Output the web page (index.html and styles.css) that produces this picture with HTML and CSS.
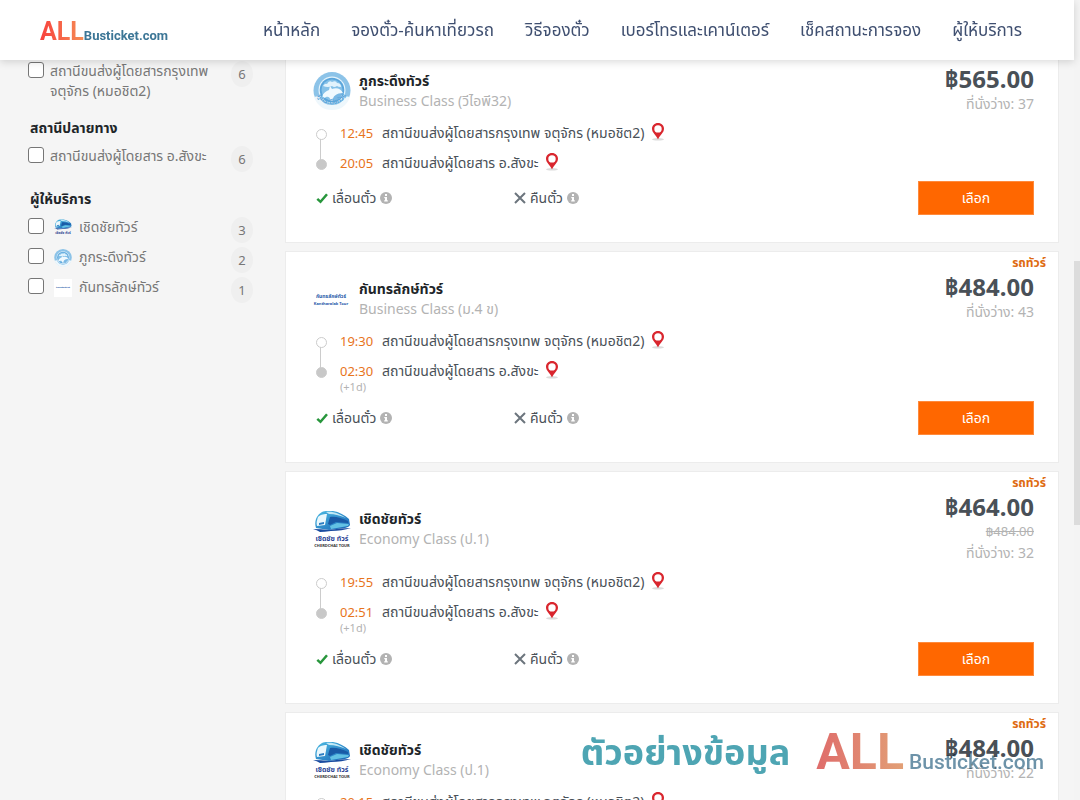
FILE: index.html
```html
<!DOCTYPE html>
<html lang="th">
<head>
<meta charset="utf-8">
<meta name="viewport" content="width=device-width, initial-scale=1">
<title>ALL Busticket.com</title>
<link rel="stylesheet" href="styles.css">
</head>
<body>
<svg class="sprite" aria-hidden="true">
  <defs>
    <linearGradient id="sea" x1="0" y1="0" x2="1" y2="1"><stop offset="0" stop-color="#4dbbe2"/><stop offset="1" stop-color="#1763b5"/></linearGradient>
    <path id="rim" d="M3 21 A17 17 0 0 0 35 21"/>
  </defs>
  <symbol id="pin" viewBox="0 0 16 18">
    <ellipse cx="8" cy="16.300" rx="6" ry="1.300" fill="#dcdcdc"/>
    <path d="M8 0C4.500 0 2 2.500 2 5.800c0 3.800 3.800 6.200 6 10.500 2.200-4.300 6-6.700 6-10.500C14 2.500 11.500 0 8 0z" fill="#d9262e"/>
    <circle cx="8" cy="5.900" r="3.700" fill="#fff"/>
  </symbol>
  <symbol id="check" viewBox="0 0 12 12"><path d="M1.300 6.800 4.500 9.800 11 2.200" fill="none" stroke="#28963c" stroke-width="2.500"/></symbol>
  <symbol id="cross" viewBox="0 0 12 12"><path d="M1 1 11 11M11 1 1 11" fill="none" stroke="#6c757d" stroke-width="2"/></symbol>
  <symbol id="info" viewBox="0 0 12 12"><circle cx="6" cy="6" r="6" fill="#b3b3b3"/><path d="M5 2h2v2H5zM4.300 5H7v3.300h.8v1.200H4.200V8.300H5V6.200h-.7z" fill="#fff"/></symbol>
  <symbol id="phukradung" viewBox="0 0 38 38">
    <circle cx="19" cy="18.500" r="18.500" fill="#8cc3e8"/>
    <path d="M1 25q5 13 18 13t18-13l-5-1q-3 9-13 9T6 24z" fill="#eef7fc"/>
    <circle cx="19" cy="18" r="13.500" fill="#e4f3fb"/>
    <circle cx="19" cy="18" r="12.300" fill="#5aa5db"/>
    <circle cx="19" cy="18" r="10.500" fill="#85c1e8"/>
    <path d="M9 25c1-4 4-6 7-7l1-4 2 3c5-2 9 0 11 4-2 6-6 8-12 8-1-4-3-5-5-4l-3 2z" fill="#f0f9fe"/>
    <path d="M20 29c-1-5 4-8 10-8-2 5-5 8-10 8z" fill="#79b8e4"/>
    <path d="M10 14q2-3 4-2 2-4 5-2 4-2 5 1 4 0 4 4-3 0-4-1-3 2-5 0-4 2-9 0z" fill="#e2f3fc"/>
  </symbol>
  <symbol id="cherdchai" viewBox="0 0 38 38">
    <path d="M3 9C5 4 9 1 13 1h7c6 1 12 4 16 8l1 6c-1 2-3 2-5 3l-16 2-13-2C2 15 2 12 3 9z" fill="url(#sea)"/>
    <path d="M5 7c3-3 7-3 9-3l-2 11-8 1c-1-3 0-6 1-9z" fill="#e9f7fc"/>
    <path d="M13 2c7-1 14 2 20 6-5-2-11-4-17-4z" fill="#c2e8f5"/>
    <path d="M17 7c5-1 12 1 18 4v2l-12-1-6 3-2-1z" fill="#1a5aa6"/>
    <path d="M17 16l7-3 12 1-1 2-17 3z" fill="#63c1e4"/>
    <path d="M6 13l5-1v2l-5 1z" fill="#2a7dc2"/>
    <path d="M0 19q8 0 16 1 11-2 22-2-9 3-20 3-7 1-11 1-3-2-7-3z" fill="#1b4ca0"/>
  </symbol>
  <symbol id="kantharalak" viewBox="0 0 38 38"><rect width="38" height="38" fill="#fff"/></symbol>
</svg>

<header class="topbar">
  <a class="brand" href="#"><span class="brand-all">ALL</span><span class="brand-rest">Busticket.com</span></a>
  <nav class="nav">
    <a href="#">หน้าหลัก</a>
    <a href="#">จองตั๋ว-ค้นหาเที่ยวรถ</a>
    <a href="#">วิธีจองตั๋ว</a>
    <a href="#">เบอร์โทรและเคาน์เตอร์</a>
    <a href="#">เช็คสถานะการจอง</a>
    <a href="#">ผู้ให้บริการ</a>
  </nav>
</header>

<div class="page">
  <aside class="filters">
    <section class="group">
      <label class="option"><input type="checkbox"><span class="option-text">สถานีขนส่งผู้โดยสารกรุงเทพ<br>จตุจักร (หมอชิต2)</span><span class="count">6</span></label>
    </section>
    <section class="group">
      <h2>สถานีปลายทาง</h2>
      <label class="option"><input type="checkbox"><span class="option-text">สถานีขนส่งผู้โดยสาร อ.สังขะ</span><span class="count">6</span></label>
    </section>
    <section class="group">
      <h2>ผู้ให้บริการ</h2>
      <label class="option"><input type="checkbox"><svg class="mini" viewBox="0 0 38 38"><use href="#cherdchai"/><text class="bus-name" x="19" y="31" text-anchor="middle">เชิดชัย ทัวร์</text></svg><span class="option-text">เชิดชัยทัวร์</span><span class="count">3</span></label>
      <label class="option"><input type="checkbox"><svg class="mini" viewBox="0 0 38 38"><use href="#phukradung"/></svg><span class="option-text">ภูกระดึงทัวร์</span><span class="count">2</span></label>
      <label class="option"><input type="checkbox"><svg class="mini" viewBox="0 0 38 38"><use href="#kantharalak"/><text class="kan-name" x="19" y="19" text-anchor="middle">กันทรลักษ์ทัวร์</text></svg><span class="option-text">กันทรลักษ์ทัวร์</span><span class="count">1</span></label>
    </section>
  </aside>

  <main class="trips">
    <article class="trip">
      <span class="tag">รถทัวร์</span>
      <div class="row head">
        <svg class="logo" viewBox="0 0 38 38"><use href="#phukradung"/><text class="rim-text"><textPath href="#rim" startOffset="50%" text-anchor="middle">ภูกระดึงทัวร์</textPath></text></svg>
        <div class="operator"><h3>ภูกระดึงทัวร์</h3><p>Business Class (วีไอพี32)</p></div>
        <div class="fare"><strong>฿565.00</strong><span>ที่นั่งว่าง: 37</span></div>
      </div>
      <ol class="route">
        <li><time>12:45</time><span>สถานีขนส่งผู้โดยสารกรุงเทพ จตุจักร (หมอชิต2)</span><svg class="pin"><use href="#pin"/></svg></li>
        <li><time>20:05</time><span>สถานีขนส่งผู้โดยสาร อ.สังขะ</span><svg class="pin"><use href="#pin"/></svg></li>
      </ol>
      <div class="row foot">
        <span class="perk"><svg class="ico"><use href="#check"/></svg>เลื่อนตั๋ว<svg class="ico info"><use href="#info"/></svg></span>
        <span class="perk"><svg class="ico"><use href="#cross"/></svg>คืนตั๋ว<svg class="ico info"><use href="#info"/></svg></span>
        <button class="select" type="button">เลือก</button>
      </div>
    </article>

    <article class="trip">
      <span class="tag">รถทัวร์</span>
      <div class="row head">
        <svg class="logo" viewBox="0 0 38 38"><use href="#kantharalak"/><text class="kan-name" x="18" y="18" text-anchor="middle">กันทรลักษ์ทัวร์</text><text class="kan-sub" x="18" y="25" text-anchor="middle">Kantharalak Tour</text></svg>
        <div class="operator"><h3>กันทรลักษ์ทัวร์</h3><p>Business Class (ม.4 ข)</p></div>
        <div class="fare"><strong>฿484.00</strong><span>ที่นั่งว่าง: 43</span></div>
      </div>
      <ol class="route">
        <li><time>19:30</time><span>สถานีขนส่งผู้โดยสารกรุงเทพ จตุจักร (หมอชิต2)</span><svg class="pin"><use href="#pin"/></svg></li>
        <li><time>02:30</time><span>สถานีขนส่งผู้โดยสาร อ.สังขะ</span><svg class="pin"><use href="#pin"/></svg><small>(+1d)</small></li>
      </ol>
      <div class="row foot">
        <span class="perk"><svg class="ico"><use href="#check"/></svg>เลื่อนตั๋ว<svg class="ico info"><use href="#info"/></svg></span>
        <span class="perk"><svg class="ico"><use href="#cross"/></svg>คืนตั๋ว<svg class="ico info"><use href="#info"/></svg></span>
        <button class="select" type="button">เลือก</button>
      </div>
    </article>

    <article class="trip">
      <span class="tag">รถทัวร์</span>
      <div class="row head">
        <svg class="logo" viewBox="0 0 38 38"><use href="#cherdchai"/><text class="bus-name" x="19" y="31" text-anchor="middle">เชิดชัย ทัวร์</text><text class="bus-sub" x="19" y="37" text-anchor="middle">CHERDCHAI TOUR</text></svg>
        <div class="operator"><h3>เชิดชัยทัวร์</h3><p>Economy Class (ป.1)</p></div>
        <div class="fare"><strong>฿464.00</strong><s>฿484.00</s><span>ที่นั่งว่าง: 32</span></div>
      </div>
      <ol class="route">
        <li><time>19:55</time><span>สถานีขนส่งผู้โดยสารกรุงเทพ จตุจักร (หมอชิต2)</span><svg class="pin"><use href="#pin"/></svg></li>
        <li><time>02:51</time><span>สถานีขนส่งผู้โดยสาร อ.สังขะ</span><svg class="pin"><use href="#pin"/></svg><small>(+1d)</small></li>
      </ol>
      <div class="row foot">
        <span class="perk"><svg class="ico"><use href="#check"/></svg>เลื่อนตั๋ว<svg class="ico info"><use href="#info"/></svg></span>
        <span class="perk"><svg class="ico"><use href="#cross"/></svg>คืนตั๋ว<svg class="ico info"><use href="#info"/></svg></span>
        <button class="select" type="button">เลือก</button>
      </div>
    </article>

    <article class="trip">
      <span class="tag">รถทัวร์</span>
      <div class="row head">
        <svg class="logo" viewBox="0 0 38 38"><use href="#cherdchai"/><text class="bus-name" x="19" y="31" text-anchor="middle">เชิดชัย ทัวร์</text><text class="bus-sub" x="19" y="37" text-anchor="middle">CHERDCHAI TOUR</text></svg>
        <div class="operator"><h3>เชิดชัยทัวร์</h3><p>Economy Class (ป.1)</p></div>
        <div class="fare"><strong>฿484.00</strong><span>ที่นั่งว่าง: 22</span></div>
      </div>
      <ol class="route">
        <li><time>20:15</time><span>สถานีขนส่งผู้โดยสารกรุงเทพ จตุจักร (หมอชิต2)</span><svg class="pin"><use href="#pin"/></svg></li>
      </ol>
    </article>
  </main>
</div>

<div class="scroll-track"><div class="scroll-thumb"></div></div>

<div class="watermark">
  <span class="wm-note">ตัวอย่างข้อมูล</span>
  <span class="wm-brand"><span class="wm-all">ALL</span><span class="wm-rest">Busticket.com</span></span>
</div>
</body>
</html>
```

FILE: styles.css
```css
* { box-sizing: border-box; }

body {
  margin: 0;
  height: 100vh;
  overflow: hidden;
  background: #f5f5f5;
  color: #495057;
  font: 14px/20px "Noto Sans", "Noto Sans Thai", Tahoma, sans-serif;
}

h2, h3, p, ol { margin: 0; padding: 0; }
a { color: inherit; text-decoration: none; }
.sprite { position: absolute; width: 0; height: 0; }

/* Top bar */
.topbar {
  position: fixed;
  z-index: 2;
  top: 0;
  left: 0;
  right: 6px;
  height: 60px;
  padding: 0 52px 0 40px;
  display: flex;
  align-items: center;
  background: #fff;
  box-shadow: 0 2px 8px rgba(0, 0, 0, .15);
}
.brand { width: 223px; padding-top: 4px; display: flex; align-items: baseline; font-family: Roboto, sans-serif; }
.brand-all {
  font-size: 25px;
  line-height: 28px;
  font-weight: 700;
  background: linear-gradient(90deg, #f8413d, #f58d55);
  background-clip: text;
  color: transparent;
}
.brand-rest { font-size: 13px; font-weight: 700; color: #3c7696; }
.nav { flex: 1; display: flex; justify-content: space-between; font-size: 17px; white-space: nowrap; color: #3f4f70; }

.page { display: flex; padding: 43px 21px 0 28px; }

/* Filters */
.filters { width: 225px; margin-right: 32px; padding-top: 18px; flex: none; }
.group { margin-bottom: 15px; }
h2 { margin: 0 2px 6px; font-size: 14px; line-height: 24px; color: #212529; }
.option { display: flex; align-items: flex-start; color: #777; }
.option + .option { margin-top: 4px; }
.option input {
  appearance: none;
  width: 16px;
  height: 16px;
  margin: 1px 6px 0 0;
  flex: none;
  border: 1px solid #767676;
  border-radius: 3px;
  background: #fff;
}
.option-text { flex: 1; white-space: nowrap; }
.mini { width: 18px; height: 18px; margin: 2px 7px 0 4px; flex: none; }
.count { width: 22px; height: 26px; border-radius: 50%; background: #efefef; font-size: 13px; line-height: 26px; text-align: center; }

/* Trip cards */
.trips { flex: 1; min-width: 0; display: grid; gap: 8px; }
.trip { position: relative; padding: 21px 24px 27px 27px; border: 1px solid #ececec; background: #fff; }
.tag { position: absolute; top: 1px; right: 12px; font-size: 12px; font-weight: 700; color: #de6a10; }
.row { display: flex; align-items: center; }
.logo { width: 38px; height: 38px; margin-right: 8px; flex: none; }
.operator { flex: 1; }
h3 { font-size: 14px; line-height: 20px; color: #212529; }
.operator p { color: #b3b3b3; }
.fare { display: grid; justify-items: end; padding-bottom: 2px; line-height: 21px; color: #b3b3b3; }
.fare strong { font-size: 24px; line-height: 28px; color: #495057; }
.fare s { font-size: 13px; }

.route { position: relative; padding: 2px 0 3px 27px; list-style: none; }
.route li { position: relative; display: grid; grid-template-columns: 42px auto 1fr; padding: 5px 0; }
.route li::before {
  content: "";
  position: absolute;
  z-index: 1;
  top: 11px;
  left: -24px;
  width: 9px;
  height: 9px;
  border: 1px solid #ccc;
  border-radius: 50%;
  background: #fff;
}
.route li:nth-child(2)::before { background: #c8c8c8; }
.route li:first-child::after {
  content: "";
  position: absolute;
  top: 20px;
  left: -20px;
  width: 1px;
  height: 22px;
  background: #ccc;
}
.route li:only-child::after { display: none; }
time { font-size: 13px; color: #e8741c; }
.pin { width: 16px; height: 18px; margin-left: 5px; }
.route small { grid-column: 1 / -1; font-size: 11px; line-height: 12px; color: #b3b3b3; }

.foot { min-height: 34px; padding-left: 3px; }
.perk { width: 198px; display: flex; align-items: center; gap: 4px; white-space: nowrap; }
.ico { width: 12px; height: 12px; flex: none; }
.select {
  width: 116px;
  height: 34px;
  margin-left: auto;
  border: 1px solid #ff8a3c;
  background: #ff6700;
  color: #fff;
  font: inherit;
}

/* Scrollbar */
.scroll-track { position: fixed; top: 0; right: 0; bottom: 0; width: 6px; padding-top: 261px; background: #f4f4f4; }
.scroll-thumb { height: 264px; background: #dcdcdc; }

/* Sample-data overlay */
.watermark {
  position: fixed;
  right: 36px;
  bottom: 18px;
  display: flex;
  align-items: center;
  gap: 26px;
  mix-blend-mode: multiply;
  white-space: nowrap;
}
.wm-note { font-size: 36px; line-height: 60px; font-weight: 700; color: #4ea5b3; }
.wm-brand { display: flex; align-items: baseline; gap: 5px; font-family: Roboto, sans-serif; }
.wm-all {
  font-size: 50px;
  line-height: 60px;
  font-weight: 700;
  background: linear-gradient(90deg, #df6c6b, #e2a076);
  background-clip: text;
  color: transparent;
}
.wm-rest { font-size: 21px; font-weight: 500; color: #6d93a9; }

/* Lettering in operator logos */
.rim-text { font-size: 7px; font-weight: 700; fill: #5ba5da; }
.bus-name { font-size: 7px; font-weight: 700; fill: #293f94; }
.bus-sub { font-size: 4px; font-weight: 700; fill: #333; }
.kan-name { font-size: 5px; font-weight: 700; fill: #2458a8; }
.kan-sub { font-size: 4px; font-weight: 700; fill: #2458a8; }
```
